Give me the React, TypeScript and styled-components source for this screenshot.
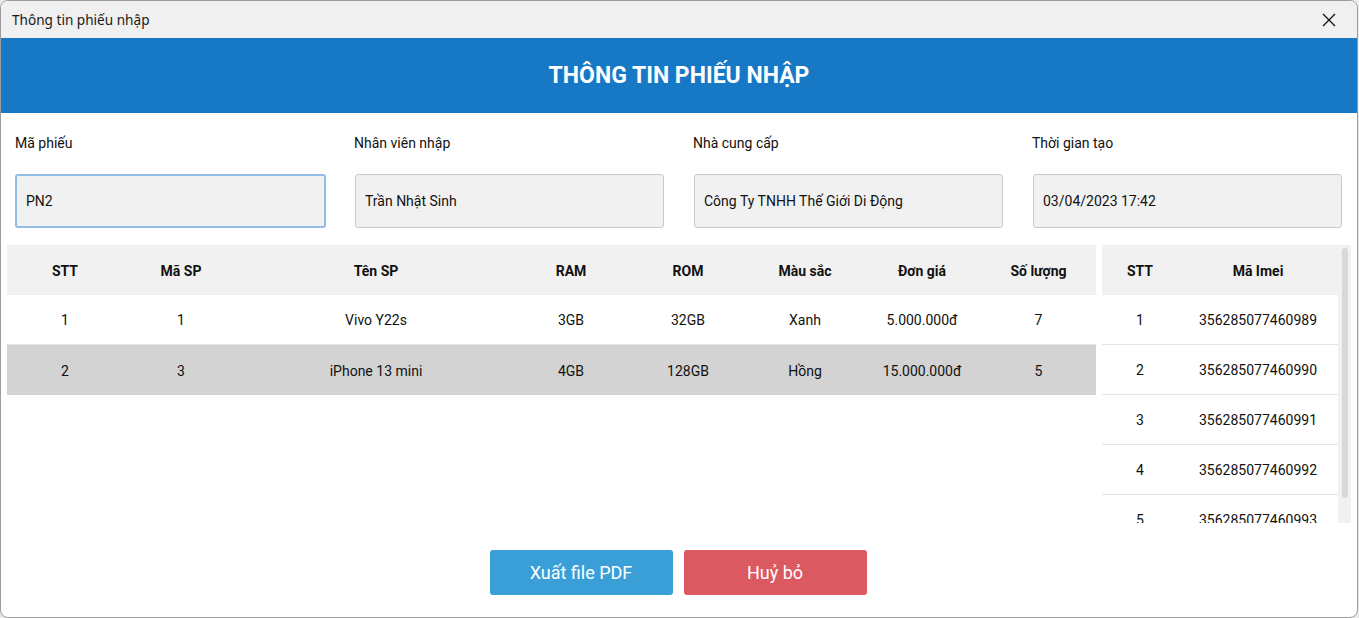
import React from 'react';
import styled, { createGlobalStyle } from 'styled-components';

const GlobalStyle = createGlobalStyle`
  html, body {
    margin: 0;
    padding: 0;
    background: #e9e9e9;
    font-family: Roboto, "Liberation Sans", sans-serif;
  }
`;

const Window = styled.div`
  box-sizing: border-box;
  width: 1358px;
  height: 618px;
  border: 1px solid #9c9c9c;
  border-radius: 8px;
  overflow: hidden;
  background: #ffffff;
  display: flex;
  flex-direction: column;
`;

const TitleBar = styled.div`
  height: 37px;
  flex-shrink: 0;
  background: #f0f0f0;
  display: flex;
  align-items: center;
  justify-content: space-between;
  padding: 0 20px 0 11px;
  font-family: "Noto Sans", "Liberation Sans", sans-serif;
  font-size: 13.6px;
  color: #1a1a1a;
`;

const CloseButton = styled.button`
  border: none;
  background: transparent;
  padding: 0;
  width: 16px;
  height: 16px;
  display: flex;
  align-items: center;
  justify-content: center;
`;

const Banner = styled.div`
  height: 75px;
  flex-shrink: 0;
  background: #1779c6;
  display: flex;
  align-items: center;
  justify-content: center;
  color: #ffffff;
  font-size: 23px;
  font-weight: 700;
`;

const FormGrid = styled.div`
  display: grid;
  grid-template-columns: repeat(4, 310px);
  column-gap: 29px;
  padding: 20px 0 0 13px;
`;

const Field = styled.div`
  display: flex;
  flex-direction: column;
`;

const Label = styled.div`
  font-size: 14px;
  color: #111;
  height: 20px;
  line-height: 20px;
  padding-left: 1px;
  margin-bottom: 21px;
`;

const Input = styled.div<{ $focused?: boolean }>`
  box-sizing: border-box;
  height: 54px;
  margin-left: ${(p) => (p.$focused ? '1px' : '2px')};
  width: ${(p) => (p.$focused ? '311px' : '309px')};
  background: #f1f1f1;
  border: ${(p) => (p.$focused ? '2px solid #92bde6' : '1px solid #c9c9c9')};
  border-radius: 3px;
  display: flex;
  align-items: center;
  padding-left: 9px;
  font-size: 14px;
  color: #111;
`;

const Tables = styled.div`
  display: flex;
  gap: 6px;
  padding: 17px 0 0 6px;
  height: 280px;
`;

const MainTable = styled.div`
  width: 1089px;
  display: flex;
  flex-direction: column;
`;

const Row = styled.div<{ $cols: string; $bg?: string; $head?: boolean; $line?: boolean }>`
  display: grid;
  grid-template-columns: ${(p) => p.$cols};
  height: ${(p) => (p.$line ? '49px' : '50px')};
  flex-shrink: 0;
  background: ${(p) => p.$bg || '#ffffff'};
  border-bottom: ${(p) => (p.$line ? '1px solid #e4e4e4' : 'none')};
  font-size: 14px;
  font-weight: ${(p) => (p.$head ? 700 : 400)};
  color: #111;
`;

const Cell = styled.div`
  display: flex;
  align-items: center;
  justify-content: center;
  white-space: nowrap;
  padding-top: 1px;
`;

const SidePanel = styled.div`
  width: 249px;
  height: 278px;
  display: flex;
`;

const SideList = styled.div`
  width: 236px;
  overflow: hidden;
  display: flex;
  flex-direction: column;
`;

const Track = styled.div`
  width: 13px;
  background: #f1f1f1;
  padding: 3px 3px 0 4px;
  box-sizing: border-box;
`;

const Thumb = styled.div`
  width: 6px;
  height: 250px;
  border-radius: 3px;
  background: #d9d9d9;
`;

const Actions = styled.div`
  display: flex;
  justify-content: center;
  gap: 11px;
  padding: 25px 2px 0 0;
`;

const Button = styled.button<{ $color: string }>`
  width: 183px;
  height: 45px;
  border: none;
  border-radius: 3px;
  background: ${(p) => p.$color};
  color: #ffffff;
  font-family: Roboto, "Liberation Sans", sans-serif;
  font-size: 18px;
`;

const mainCols = '116px 116px 274px 116px 118px 116px 118px 115px';
const sideCols = '76px 160px';

const products = [
  ['1', '1', 'Vivo Y22s', '3GB', '32GB', 'Xanh', '5.000.000đ', '7'],
  ['2', '3', 'iPhone 13 mini', '4GB', '128GB', 'Hồng', '15.000.000đ', '5'],
];

const imeis = ['356285077460989', '356285077460990', '356285077460991', '356285077460992', '356285077460993'];

const fields = [
  { label: 'Mã phiếu', value: 'PN2', focused: true },
  { label: 'Nhân viên nhập', value: 'Trần Nhật Sinh' },
  { label: 'Nhà cung cấp', value: 'Công Ty TNHH Thế Giới Di Động' },
  { label: 'Thời gian tạo', value: '03/04/2023 17:42' },
];

const App = () => {
  return (
    <>
      <GlobalStyle />
      <Window>
        <TitleBar>
          <span>Thông tin phiếu nhập</span>
          <CloseButton>
            <svg width="14" height="14" viewBox="0 0 14 14">
              <path d="M1 1 L13 13 M13 1 L1 13" stroke="#111" strokeWidth="1.3" fill="none" />
            </svg>
          </CloseButton>
        </TitleBar>
        <Banner>THÔNG TIN PHIẾU NHẬP</Banner>
        <FormGrid>
          {fields.map((f) => (
            <Field key={f.label}>
              <Label>{f.label}</Label>
              <Input $focused={f.focused}>{f.value}</Input>
            </Field>
          ))}
        </FormGrid>
        <Tables>
          <MainTable>
            <Row $cols={mainCols} $bg="#f1f1f1" $head>
              {['STT', 'Mã SP', 'Tên SP', 'RAM', 'ROM', 'Màu sắc', 'Đơn giá', 'Số lượng'].map((h) => (
                <Cell key={h}>{h}</Cell>
              ))}
            </Row>
            {products.map((p, i) => (
              <Row key={p[0]} $cols={mainCols} $bg={i === 1 ? '#d3d3d3' : '#ffffff'} $line={i === 0}>
                {p.map((v, j) => (
                  <Cell key={j}>{v}</Cell>
                ))}
              </Row>
            ))}
          </MainTable>
          <SidePanel>
            <SideList>
              <Row $cols={sideCols} $bg="#f1f1f1" $head>
                <Cell>STT</Cell>
                <Cell>Mã Imei</Cell>
              </Row>
              {imeis.map((m, i) => (
                <Row key={m} $cols={sideCols} $line>
                  <Cell>{i + 1}</Cell>
                  <Cell>{m}</Cell>
                </Row>
              ))}
            </SideList>
            <Track>
              <Thumb />
            </Track>
          </SidePanel>
        </Tables>
        <Actions>
          <Button $color="#3a9fd7">Xuất file PDF</Button>
          <Button $color="#db5a61">Huỷ bỏ</Button>
        </Actions>
      </Window>
    </>
  );
};

export default App;
